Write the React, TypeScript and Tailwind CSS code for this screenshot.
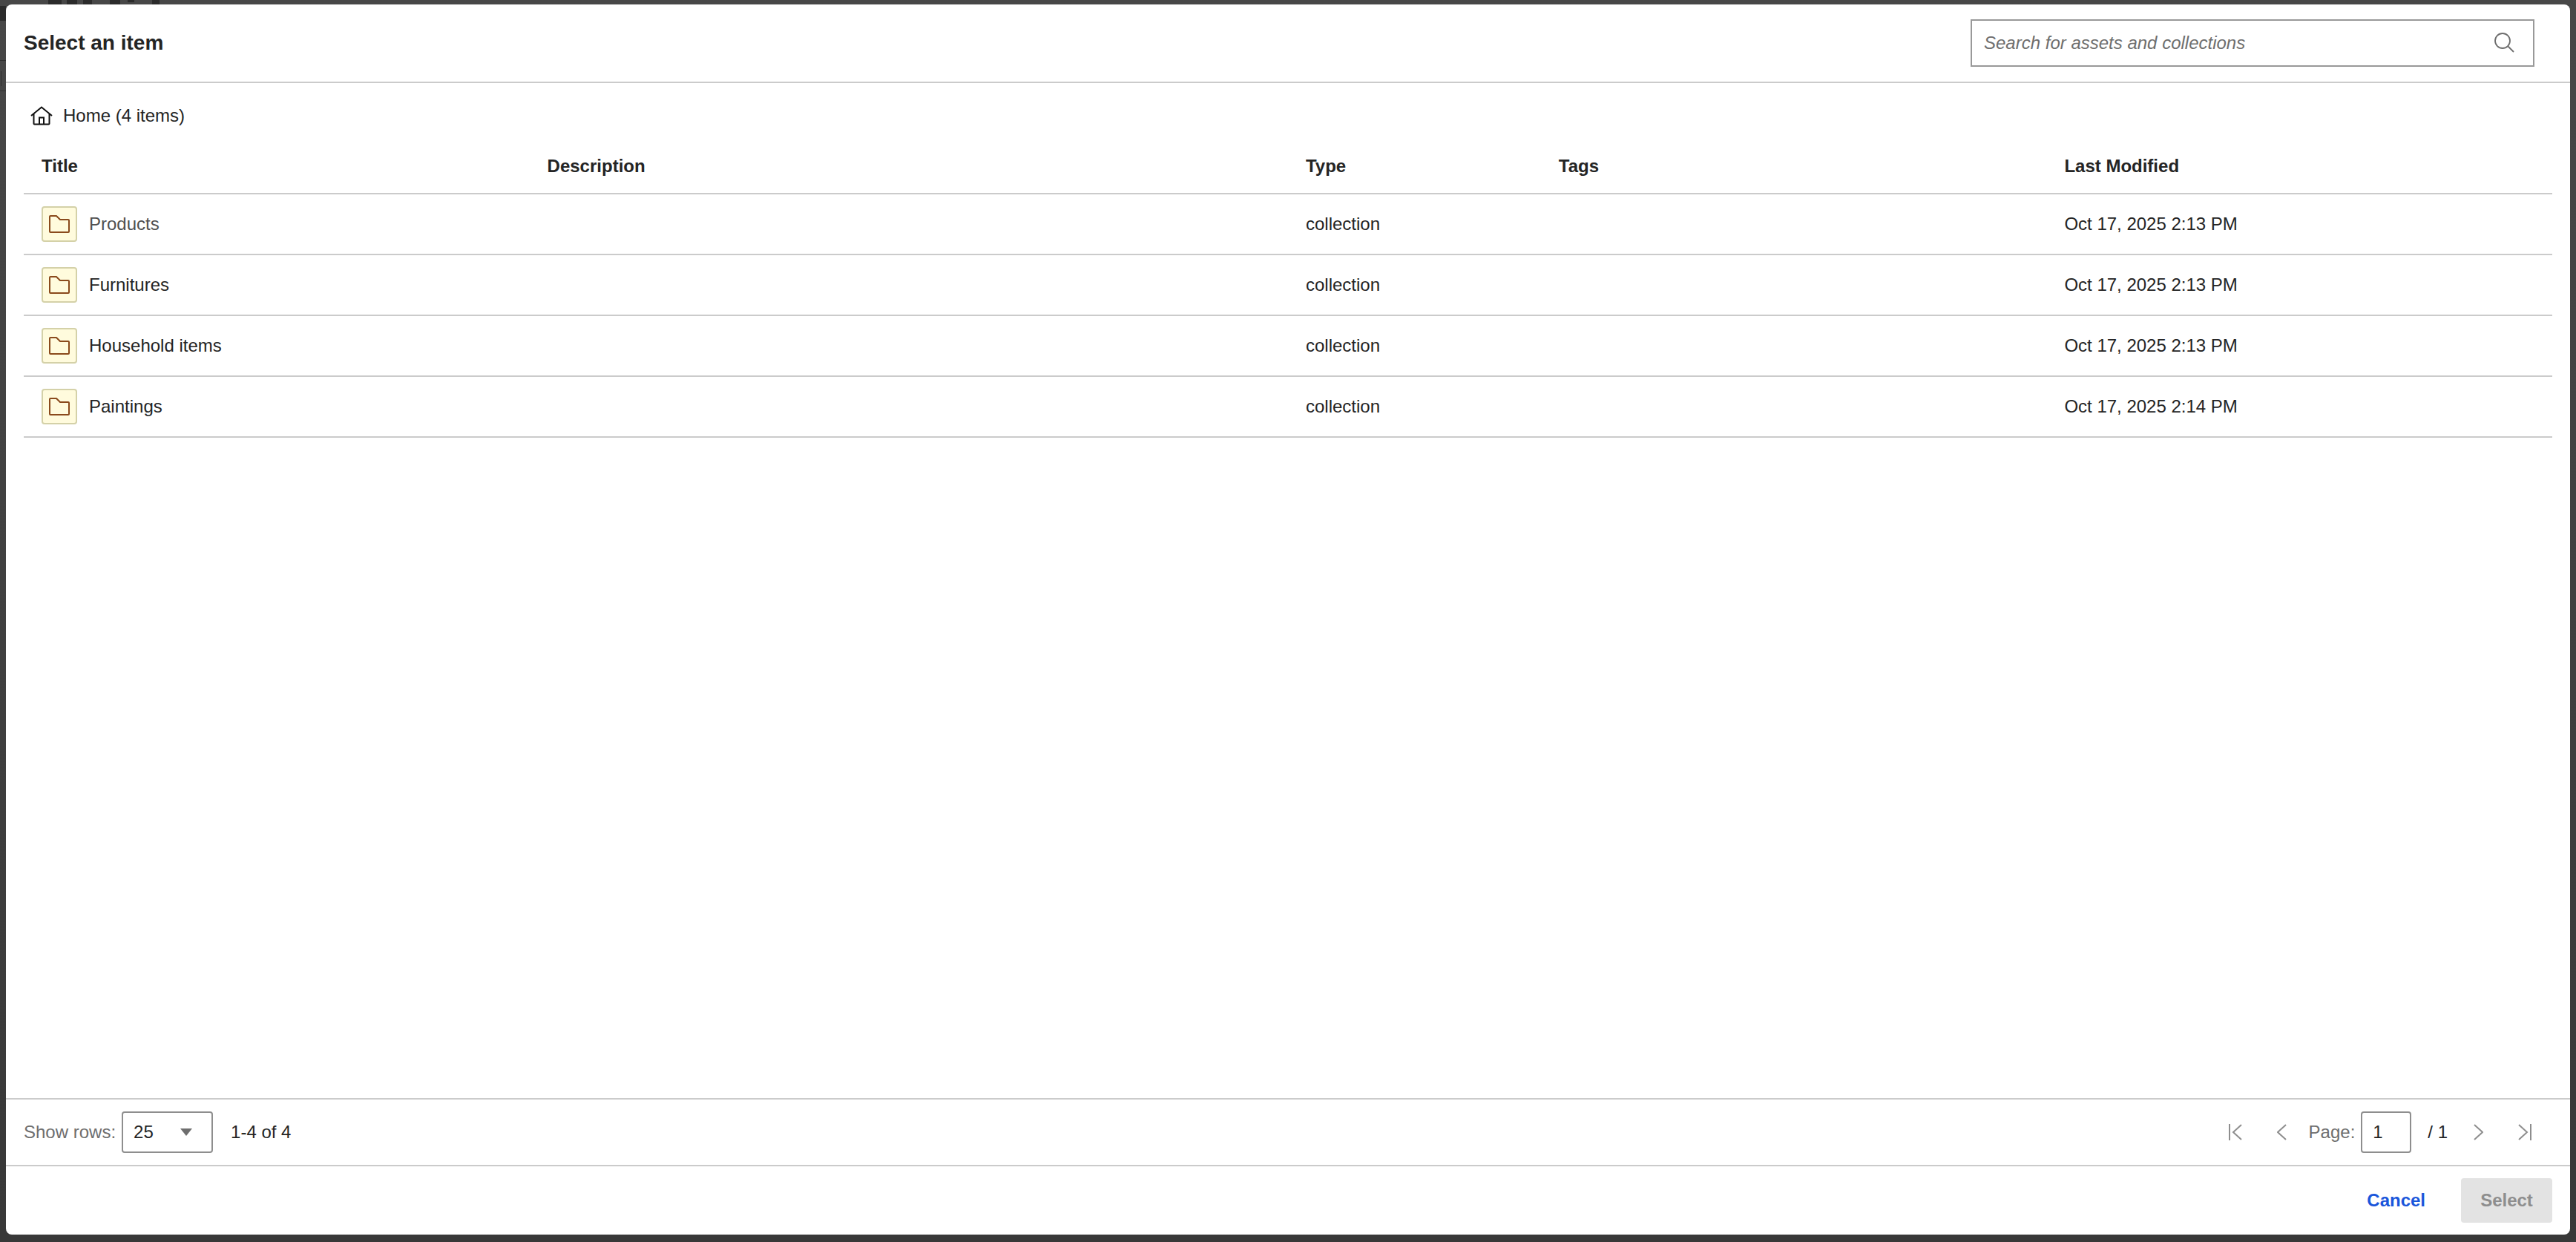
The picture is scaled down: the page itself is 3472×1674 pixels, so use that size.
const rows = [
  { title: "Products", modified: "Oct 17, 2025 2:13 PM", muted: true },
  { title: "Furnitures", modified: "Oct 17, 2025 2:13 PM" },
  { title: "Household items", modified: "Oct 17, 2025 2:13 PM" },
  { title: "Paintings", modified: "Oct 17, 2025 2:14 PM" },
];

const columns = "grid grid-cols-[20%_30%_10%_20%_20%]";

function HomeIcon() {
  return (
    <svg width="30" height="26" viewBox="0 0 30 26" fill="none" stroke="#111111" strokeWidth="2">
      <path d="M1 13 15 1.500 29 13" />
      <path d="M4.500 10.500V23.500A1 1 0 0 0 5.500 24.500H24.500A1 1 0 0 0 25.500 23.500V10.500" />
      <path d="M12 24.500V15.500H18V24.500" />
    </svg>
  );
}

function FolderIcon() {
  return (
    <svg width="28" height="24" viewBox="0 0 28 24" fill="none" stroke="#8a4a1c" strokeWidth="2" strokeLinejoin="round">
      <path d="M1 22V2A1 1 0 0 1 2 1H10L15 6H26A1 1 0 0 1 27 7V22A1 1 0 0 1 26 23H2A1 1 0 0 1 1 22Z" />
    </svg>
  );
}

function SearchIcon() {
  return (
    <svg width="32" height="32" viewBox="0 0 32 32" fill="none" stroke="#6e6e6e" strokeWidth="1.800">
      <circle cx="13" cy="13" r="10" />
      <path d="M20.500 20.500 28 28" />
    </svg>
  );
}

function PageEdge({ last }: { last?: boolean }) {
  return (
    <svg width="20" height="24" viewBox="0 0 20 24" fill="none" stroke="#8e8e8e" strokeWidth="2">
      {last ? (
        <>
          <path d="M2 2 13 12 2 22" />
          <path d="M18 1V23" />
        </>
      ) : (
        <>
          <path d="M2 1V23" />
          <path d="M18 2 7 12 18 22" />
        </>
      )}
    </svg>
  );
}

function PageStep({ next }: { next?: boolean }) {
  return (
    <svg width="13" height="22" viewBox="0 0 13 22" fill="none" stroke="#8e8e8e" strokeWidth="2">
      <path d={next ? "M1 1 12 11 1 21" : "M12 1 1 11 12 21"} />
    </svg>
  );
}

export default function App() {
  return (
    <div className="relative h-[1674px] w-full overflow-hidden bg-linear-to-b from-[#474747] to-[#383838] pt-[6px] pr-[8px] pb-[10px] pl-[8px] font-['Liberation_Sans',Arial,sans-serif] text-[24px] text-[#242424]">
      {/* scraps of the page showing behind the dialog */}
      <div className="absolute top-0 left-[65px] h-[6px] w-[18px] bg-[#2b2b2b]" />
      <div className="absolute top-0 left-[90px] h-[6px] w-[14px] bg-[#2b2b2b]" />
      <div className="absolute top-0 left-[112px] h-[6px] w-[12px] bg-[#2b2b2b]" />
      <div className="absolute top-0 left-[148px] h-[6px] w-[14px] bg-[#2b2b2b]" />
      <div className="absolute top-0 left-[172px] h-[3px] w-[9px] bg-[#2b2b2b]" />
      <div className="absolute top-0 left-[205px] h-[6px] w-[10px] bg-[#2b2b2b]" />
      <div className="absolute top-[8px] left-0 h-[20px] w-[8px] bg-[#2b2b2b]" />
      <div className="absolute top-[81px] left-0 h-[1px] w-[8px] bg-[#2e2e2e]" />
      <div className="absolute top-[96px] left-[1px] h-[20px] w-[1px] bg-[#2e2e2e]" />
      <div className="absolute top-[122px] left-0 h-[1px] w-[8px] bg-[#2e2e2e]" />

      <div className="relative flex h-full flex-col overflow-hidden rounded-[8px] bg-white">
        <header className="flex h-[106px] shrink-0 items-center justify-between border-b-2 border-[#cbcbcb] pr-[48px] pl-[24px]">
          <h1 className="text-[28px] font-bold">Select an item</h1>
          <div className="flex h-[64px] w-[760px] items-center justify-between border-2 border-[#999999] pr-[22px] pl-[16px]">
            <span className="text-[24px] text-[#6e6e6e] italic">Search for assets and collections</span>
            <SearchIcon />
          </div>
        </header>

        <main className="flex min-h-0 flex-1 flex-col px-[24px]">
          <div className="flex h-[86px] shrink-0 items-center gap-[14px] pt-[2px] pl-[9px]">
            <HomeIcon />
            <span>Home (4 items)</span>
          </div>
          <div className={`${columns} h-[64px] shrink-0 items-center border-b-2 border-[#cbcbcb] pb-[10px] font-bold`}>
            {["Title", "Description", "Type", "Tags", "Last Modified"].map((label) => (
              <div key={label} className="pl-[24px]">
                {label}
              </div>
            ))}
          </div>
          {rows.map((row) => (
            <div key={row.title} className={`${columns} h-[82px] shrink-0 items-center border-b-2 border-[#cbcbcb]`}>
              <div className="flex items-center gap-[16px] pl-[24px]">
                <div className="flex size-[48px] items-center justify-center rounded-[4px] border-2 border-[#d4d1a8] bg-[#fffbdd]">
                  <FolderIcon />
                </div>
                <span className={row.muted ? "text-[#505050]" : ""}>{row.title}</span>
              </div>
              <div />
              <div className="pl-[24px]">collection</div>
              <div />
              <div className="pl-[24px]">{row.modified}</div>
            </div>
          ))}
        </main>

        <div className="flex h-[92px] shrink-0 items-center justify-between border-t-2 border-b-2 border-[#cbcbcb] pr-[51px] pl-[24px]">
          <div className="flex items-center">
            <span className="text-[#6e6e6e]">Show rows:</span>
            <div className="ml-[8px] flex h-[56px] w-[123px] items-center justify-between rounded-[4px] border-2 border-[#8e8e8e] pr-[26px] pl-[14px]">
              <span>25</span>
              <span className="h-0 w-0 border-x-[8px] border-t-[10px] border-x-transparent border-t-[#6e6e6e]" />
            </div>
            <span className="ml-[24px]">1-4 of 4</span>
          </div>
          <div className="flex items-center">
            <PageEdge />
            <div className="ml-[46px] flex">
              <PageStep />
            </div>
            <span className="ml-[30px] text-[#6e6e6e]">Page:</span>
            <div className="ml-[8px] flex h-[56px] w-[68px] items-center rounded-[4px] border-2 border-[#8e8e8e] pl-[14px]">1</div>
            <span className="ml-[22px]">/ 1</span>
            <div className="ml-[35px] flex">
              <PageStep next />
            </div>
            <div className="ml-[46px] flex">
              <PageEdge last />
            </div>
          </div>
        </div>

        <footer className="flex h-[92px] shrink-0 items-center justify-end gap-[48px] pr-[24px]">
          <span className="font-bold text-[#1a56db]">Cancel</span>
          <div className="flex h-[60px] w-[123px] items-center justify-center rounded-[4px] bg-[#e3e3e3] font-bold text-[#8e8e8e]">
            Select
          </div>
        </footer>
      </div>
    </div>
  );
}
